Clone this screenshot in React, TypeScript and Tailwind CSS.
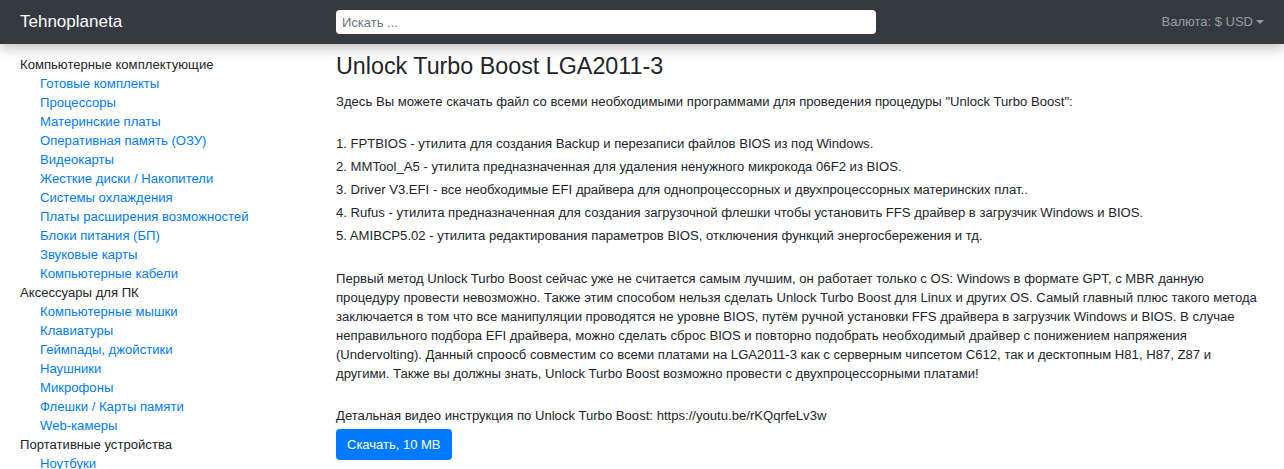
const categories: { title: string; items: string[] }[] = [
  {
    title: "Компьютерные комплектующие",
    items: [
      "Готовые комплекты",
      "Процессоры",
      "Материнские платы",
      "Оперативная память (ОЗУ)",
      "Видеокарты",
      "Жесткие диски / Накопители",
      "Системы охлаждения",
      "Платы расширения возможностей",
      "Блоки питания (БП)",
      "Звуковые карты",
      "Компьютерные кабели",
    ],
  },
  {
    title: "Аксессуары для ПК",
    items: [
      "Компьютерные мышки",
      "Клавиатуры",
      "Геймпады, джойстики",
      "Наушники",
      "Микрофоны",
      "Флешки / Карты памяти",
      "Web-камеры",
    ],
  },
  {
    title: "Портативные устройства",
    items: ["Ноутбуки"],
  },
];

const tools = [
  "1. FPTBIOS - утилита для создания Backup и перезаписи файлов BIOS из под Windows.",
  "2. MMTool_A5 - утилита предназначенная для удаления ненужного микрокода 06F2 из BIOS.",
  "3. Driver V3.EFI - все необходимые EFI драйвера для однопроцессорных и двухпроцессорных материнских плат..",
  "4. Rufus - утилита предназначенная для создания загрузочной флешки чтобы установить FFS драйвер в загрузчик Windows и BIOS.",
  "5. AMIBCP5.02 - утилита редактирования параметров BIOS, отключения функций энергосбережения и тд.",
];

export default function App() {
  return (
    <div className="h-[469px] overflow-hidden bg-white text-[#212529] font-['Liberation_Sans',Arial,sans-serif] text-[13.12px]">
      <nav className="relative z-10 flex h-[44px] items-center bg-[#343a40] px-5 shadow-[0_4px_12px_rgba(0,0,0,0.25)]">
        <a className="w-[316px] text-[17px] text-white">Tehnoplaneta</a>
        <input
          placeholder="Искать ..."
          className="h-[24px] w-[540px] rounded-[4px] bg-white px-[6px] text-[13px] text-[#495057] outline-none placeholder:text-[#6c757d]"
        />
        <div className="ml-auto flex items-center text-[13px] text-[rgba(255,255,255,0.5)]">
          Валюта: $ USD
          <span className="ml-[3px] inline-block border-x-[4px] border-t-[4px] border-x-transparent border-t-[rgba(255,255,255,0.5)]" />
        </div>
      </nav>

      <div className="flex px-5">
        <aside className="w-[316px] shrink-0 pt-[11px] leading-[19px]">
          {categories.map((c) => (
            <div key={c.title}>
              <div className="text-[#212529]">{c.title}</div>
              {c.items.map((i) => (
                <a key={i} className="block pl-5 text-[#007bff]">
                  {i}
                </a>
              ))}
            </div>
          ))}
        </aside>

        <main className="flex-1 pt-[8px]">
          <h1 className="text-[23.3px] leading-[28px] font-normal">Unlock Turbo Boost LGA2011-3</h1>
          <p className="mt-[12px] leading-[19px]">
            Здесь Вы можете скачать файл со всеми необходимыми программами для проведения процедуры "Unlock Turbo Boost":
          </p>
          <div className="mt-[21px] leading-[23px]">
            {tools.map((t) => (
              <div key={t}>{t}</div>
            ))}
          </div>
          <p className="mt-[22px] leading-[19px]">
            Первый метод Unlock Turbo Boost сейчас уже не считается самым лучшим, он работает только с OS: Windows в формате GPT, с MBR данную процедуру провести невозможно. Также этим способом нельзя сделать Unlock Turbo Boost для Linux и других OS. Самый главный плюс такого метода заключается в том что все манипуляции проводятся не уровне BIOS, путём ручной установки FFS драйвера в загрузчик Windows и BIOS. В случае неправильного подбора EFI драйвера, можно сделать сброс BIOS и повторно подобрать необходимый драйвер с понижением напряжения (Undervolting). Данный спроосб совместим со всеми платами на LGA2011-3 как с серверным чипсетом C612, так и десктопным H81, H87, Z87 и другими. Также вы должны знать, Unlock Turbo Boost возможно провести с двухпроцессорными платами!
          </p>
          <p className="mt-[23px] leading-[19px]">Детальная видео инструкция по Unlock Turbo Boost: https://youtu.be/rKQqrfeLv3w</p>
          <button className="mt-[4px] h-[31px] rounded-[4px] bg-[#007bff] px-[11px] text-[13px] text-white">
            Скачать, 10 MB
          </button>
        </main>
      </div>
    </div>
  );
}
